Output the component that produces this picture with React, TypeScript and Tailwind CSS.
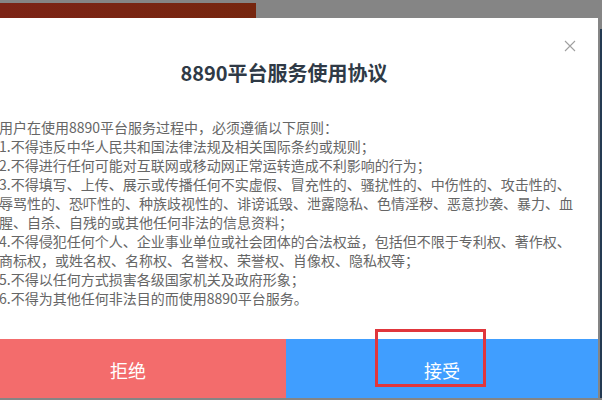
import React from "react";

const lines = [
  "用户在使用8890平台服务过程中，必须遵循以下原则：",
  "1.不得违反中华人民共和国法律法规及相关国际条约或规则；",
  "2.不得进行任何可能对互联网或移动网正常运转造成不利影响的行为；",
  "3.不得填写、上传、展示或传播任何不实虚假、冒充性的、骚扰性的、中伤性的、攻击性的、",
  "辱骂性的、恐吓性的、种族歧视性的、诽谤诋毁、泄露隐私、色情淫秽、恶意抄袭、暴力、血",
  "腥、自杀、自残的或其他任何非法的信息资料；",
  "4.不得侵犯任何个人、企业事业单位或社会团体的合法权益，包括但不限于专利权、著作权、",
  "商标权，或姓名权、名称权、名誉权、荣誉权、肖像权、隐私权等；",
  "5.不得以任何方式损害各级国家机关及政府形象；",
  "6.不得为其他任何非法目的而使用8890平台服务。",
];

export default function App() {
  return (
    <div className="w-[602px] h-[400px] bg-[#858585] overflow-hidden flex flex-col font-['Microsoft_YaHei','Noto_Sans_CJK_SC',sans-serif]">
      {/* page behind the overlay */}
      <div className="h-[18px] shrink-0 pt-[3px]">
        <div className="h-[15px] w-[256px] bg-gradient-to-r from-[#7c2416] to-[#76260f]" />
      </div>

      <div className="flex h-[380px] shrink-0">
        {/* Modal */}
        <div className="-ml-[30px] w-[628px] shrink-0 bg-white flex flex-col relative">
          <button className="absolute right-[22px] top-[22px] w-[12px] h-[12px] text-[#a0a0a0]">
            <svg viewBox="0 0 12 12" width="12" height="12" fill="none" stroke="currentColor" strokeWidth="1.1">
              <path d="M1 1L11 11M11 1L1 11" />
            </svg>
          </button>

          <h2 className="pt-[43px] text-center text-[20px] leading-[24px] font-bold text-[#2f3a46]">
            8890平台服务使用协议
          </h2>

          <div className="mt-[33px] pl-[29px] text-[14px] leading-[19px] text-[#666666] whitespace-nowrap">
            {lines.map((l) => (
              <div key={l}>{l}</div>
            ))}
          </div>

          {/* Buttons */}
          <div className="mt-auto flex h-[59px] text-white text-[18px]">
            <button className="w-[316px] bg-[#f36c6c] pt-[3px]">拒绝</button>
            <button className="flex-1 bg-[#409eff] pt-[3px]">接受</button>
          </div>

          {/* highlight box */}
          <div className="absolute left-[405px] top-[311px] w-[111px] h-[58px] border-[3px] border-[#e0363c]" />
        </div>

        {/* sliver of page at right */}
        <div className="flex-1 pt-[11px] pl-[2px]">
          <div className="h-full bg-[#243a52]" />
        </div>
      </div>
    </div>
  );
}
